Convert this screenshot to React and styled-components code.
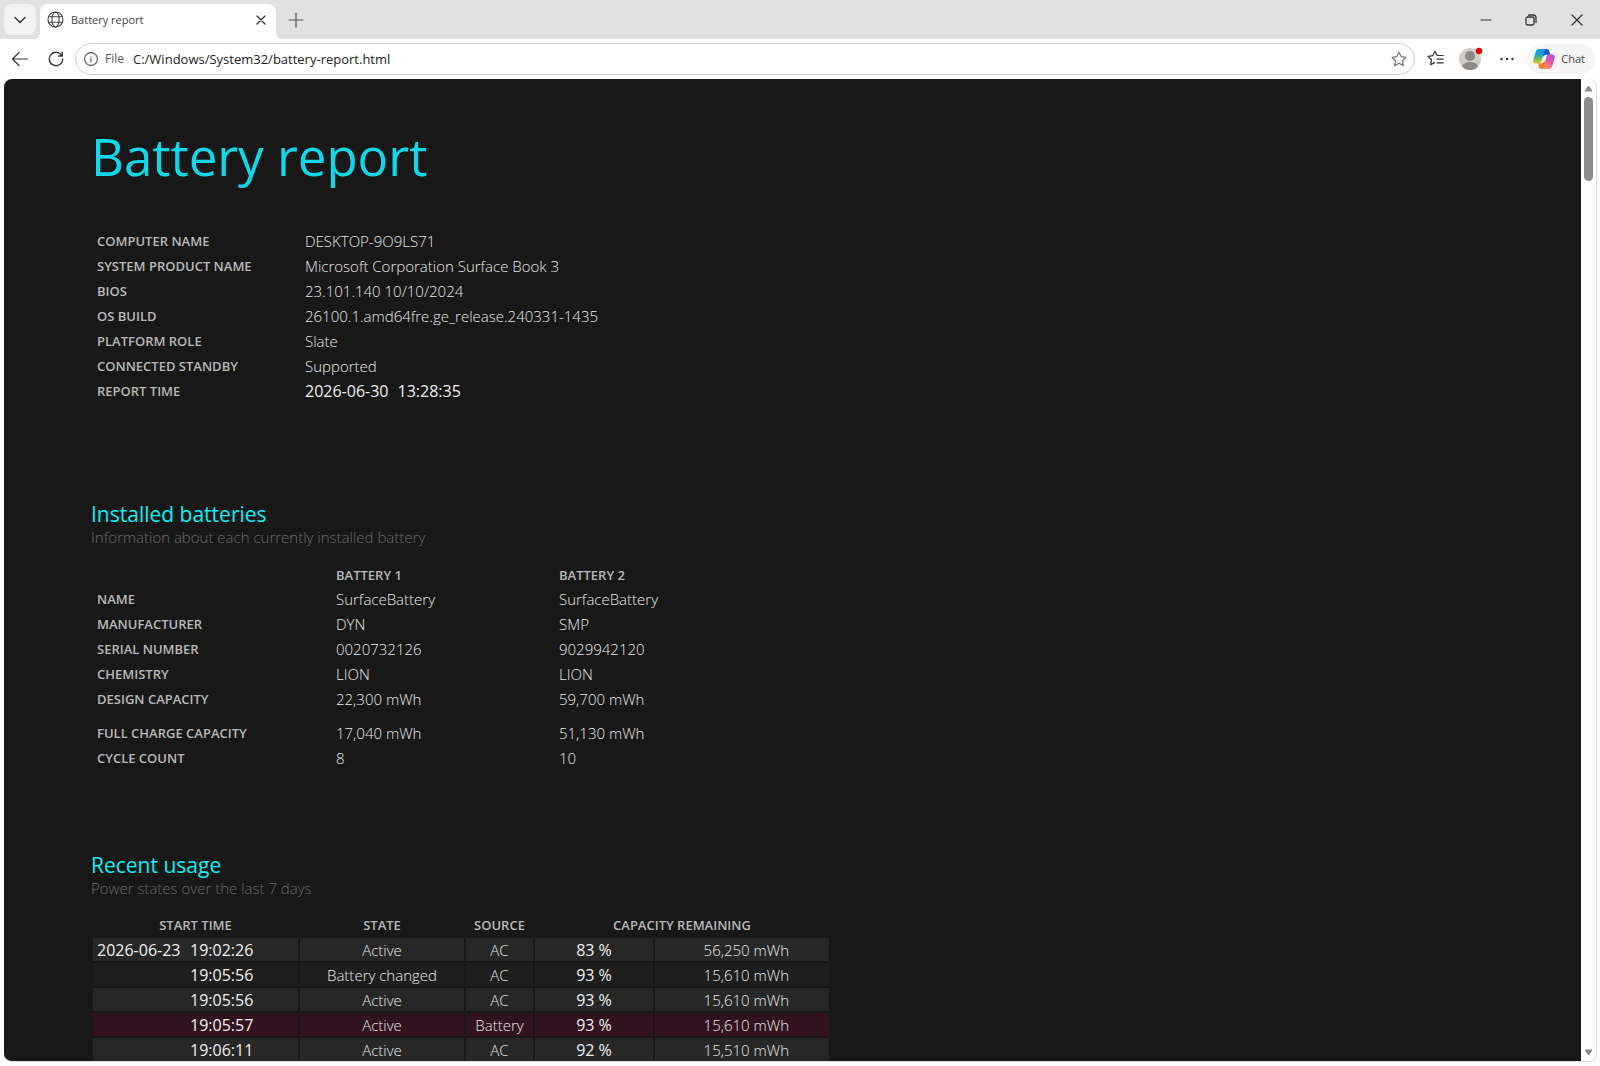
import React, { Fragment } from 'react';
import styled, { createGlobalStyle } from 'styled-components';

const GlobalStyle = createGlobalStyle`
    * {
        box-sizing: border-box;
    }

    body {
        margin: 0;
        background: #fdfdfd;
        font-family: "Open Sans", "Noto Sans", sans-serif;
    }

    button, input {
        font-family: inherit;
    }
`;

/* browser window */

const Browser = styled.div`
    display: flex;
    flex-direction: column;
    height: 100vh;
    overflow: hidden;
`;

const TabStrip = styled.header`
    display: flex;
    align-items: center;
    height: 39px;
    padding-left: 4px;
    background: #e1e1e1;
`;

const IconButton = styled.button`
    display: flex;
    align-items: center;
    justify-content: center;
    flex: none;
    width: ${props => props.$width || 36}px;
    height: 31px;
    padding: 0;
    border: 0;
    border-radius: 8px;
    background: ${props => props.$bg || 'transparent'};
    color: ${props => props.$color || '#333'};
`;

const Tab = styled.div`
    position: relative;
    display: flex;
    align-items: center;
    align-self: flex-end;
    width: 236px;
    height: 35px;
    margin-left: 4px;
    padding: 0 3px 4px 7px;
    border-radius: 8px 8px 0 0;
    background: #fff;
    color: #444;

    &::before, &::after {
        content: "";
        position: absolute;
        bottom: 0;
        width: 6px;
        height: 6px;
    }

    &::before {
        right: 100%;
        background: radial-gradient(circle at 0 0, transparent 6px, #fff 6px);
    }

    &::after {
        left: 100%;
        background: radial-gradient(circle at 100% 0, transparent 6px, #fff 6px);
    }
`;

const TabTitle = styled.span`
    flex: 1;
    margin-left: 7px;
    font-size: 11px;
`;

const WindowControls = styled.div`
    display: flex;
    margin-left: auto;
`;

const Toolbar = styled.div`
    display: flex;
    align-items: center;
    height: 40px;
    padding: 0 5px 1px 2px;
    background: #fff;
`;

const AddressBar = styled.div`
    display: flex;
    align-items: center;
    flex: 1;
    height: 32px;
    margin: 0 2px 0 1px;
    padding: 0 1px 0 8px;
    border: 1px solid #cfcfcf;
    border-radius: 16px;
    color: #555;
`;

const Scheme = styled.label`
    margin: 0 9px 0 7px;
    font-size: 12px;
`;

const UrlInput = styled.input`
    flex: 1;
    min-width: 0;
    padding: 0;
    border: 0;
    outline: 0;
    background: transparent;
    color: #222;
    font-size: 13px;
`;

const ChatButton = styled.button`
    display: flex;
    align-items: center;
    gap: 6px;
    height: 30px;
    margin-left: 2px;
    padding: 0 10px 0 6px;
    border: 0;
    border-radius: 15px;
    background: #f5f5f5;
    color: #444;
    font-size: 11px;
`;

const Frame = styled.div`
    display: flex;
    flex: 1;
    min-height: 0;
    margin: 0 3px 4px 4px;
    border: solid #dcdcdc;
    border-width: 0 1px 1px 0;
    border-radius: 8px;
    overflow: hidden;
    background: #fcfcfc;
`;

const Scrollbar = styled.div`
    display: flex;
    flex-direction: column;
    align-items: center;
    flex: none;
    width: 15px;
    padding: 6px 0 5px;
    color: #8b8b8b;
`;

const Thumb = styled.div`
    width: 9px;
    height: 84px;
    margin: 5px 0 auto;
    border-radius: 5px;
    background: #8b8b8b;
`;

/* report */

const Report = styled.main`
    flex: 1;
    padding: 41px 87px 0;
    overflow: hidden;
    background: #181818;
    color: #e8e8e8;
    font-size: 15px;
    font-weight: 300;
`;

const Title = styled.h1`
    margin: 0;
    color: #11d8e8;
    font-size: 51px;
    font-weight: 400;
    line-height: 72px;
`;

const Section = styled.section`
    margin-top: ${props => props.$gap}px;
`;

const Heading = styled.h2`
    margin: 0;
    color: #11eef4;
    font-size: 21px;
    font-weight: 400;
    line-height: 24px;
`;

const Description = styled.p`
    margin: 0 0 ${props => props.$below}px;
    color: #6a6a6a;
    line-height: 23px;
`;

const InfoTable = styled.table`
    padding-left: 6px;
    border-spacing: 0;
    line-height: 25px;

    td, th {
        padding: 0;
        text-align: left;
        white-space: nowrap;
    }

    thead {
        line-height: 24px;
    }
`;

const LabelHead = styled.th`
    color: #b8b8b8;
    font-size: 13px;
    font-weight: 600;
    text-transform: uppercase;
`;

const LabelCell = styled(LabelHead)`
    width: ${props => props.$width}px;
`;

const InfoRow = styled.tr`
    td, th {
        padding-top: ${props => (props.$spaced ? 9 : 0)}px;
    }
`;

const ValueCell = styled.td`
    width: ${props => props.$width || 'auto'};
`;

const Strong = styled.span`
    color: #f0f0f0;
    font-size: 16px;
    font-weight: 400;
`;

const Time = styled.span`
    margin-left: 9px;
`;

const UsageTable = styled.table`
    width: 740px;
    border-spacing: 2px;
    table-layout: fixed;
    line-height: 21px;

    td, th {
        height: 23px;
        padding: 2px 0 0;
        text-align: center;
        white-space: nowrap;
    }

    thead th {
        height: 22px;
        padding: 0;
        line-height: 22px;
    }
`;

const rowColors = {
    even: '#272727',
    odd: '#1e1e1e',
    battery: '#31131f',
};

const UsageRow = styled.tr`
    background: ${props => rowColors[props.$kind]};
`;

const StartTime = styled.div`
    display: grid;
    grid-template-columns: 84px auto;
    column-gap: 9px;
    padding-left: 4px;
    color: #f0f0f0;
    font-size: 16px;
    font-weight: 400;
    text-align: left;
`;

const Capacity = styled.div`
    padding-right: 40px;
    text-align: right;
`;

const system = [
    ['Computer name', 'DESKTOP-9O9LS71'],
    ['System product name', 'Microsoft Corporation Surface Book 3'],
    ['BIOS', '23.101.140 10/10/2024'],
    ['OS build', '26100.1.amd64fre.ge_release.240331-1435'],
    ['Platform role', 'Slate'],
    ['Connected standby', 'Supported'],
];

const batteries = [
    ['Name', 'SurfaceBattery', 'SurfaceBattery'],
    ['Manufacturer', 'DYN', 'SMP'],
    ['Serial number', '0020732126', '9029942120'],
    ['Chemistry', 'LION', 'LION'],
    ['Design capacity', '22,300 mWh', '59,700 mWh'],
    ['Full charge capacity', '17,040 mWh', '51,130 mWh'],
    ['Cycle count', '8', '10'],
];

const usage = [
    { date: '2026-06-23', time: '19:02:26', state: 'Active', source: 'AC', percent: '83 %', capacity: '56,250 mWh' },
    { time: '19:05:56', state: 'Battery changed', source: 'AC', percent: '93 %', capacity: '15,610 mWh' },
    { time: '19:05:56', state: 'Active', source: 'AC', percent: '93 %', capacity: '15,610 mWh' },
    { time: '19:05:57', state: 'Active', source: 'Battery', percent: '93 %', capacity: '15,610 mWh' },
    { time: '19:06:11', state: 'Active', source: 'AC', percent: '92 %', capacity: '15,510 mWh' },
];

const rowKind = (row, i) => {
    if (row.source === 'Battery') return 'battery';
    return i % 2 ? 'odd' : 'even';
};

/* icons */

const Icon = ({ size = 16, stroke = 1.2, children }) => (
    <svg width={size} height={size} viewBox={`0 0 ${size} ${size}`} fill="none" stroke="currentColor"
        strokeWidth={stroke} strokeLinecap="round" strokeLinejoin="round" aria-hidden="true">
        {children}
    </svg>
);

const GlobeIcon = () => (
    <Icon size={17} stroke={1.1}>
        <circle cx="8.5" cy="8.5" r="7.5" />
        <ellipse cx="8.5" cy="8.5" rx="3.6" ry="7.5" />
        <path d="M1.8 5.8h13.4M1.8 11.2h13.4" />
    </Icon>
);

const CopilotIcon = () => (
    <svg width="22" height="20" viewBox="0 0 22 20" aria-hidden="true">
        <defs>
            <linearGradient id="cpLeft" x1="0" y1="0" x2="0" y2="1">
                <stop offset="0" stopColor="#1a8df0" />
                <stop offset="0.4" stopColor="#22a6cc" />
                <stop offset="0.7" stopColor="#6fbf4c" />
                <stop offset="1" stopColor="#f4c81c" />
            </linearGradient>
            <linearGradient id="cpTop" x1="0" y1="0" x2="1" y2="0.4">
                <stop offset="0" stopColor="#1c7de8" />
                <stop offset="1" stopColor="#1746c8" />
            </linearGradient>
            <linearGradient id="cpRight" x1="0.8" y1="0" x2="0.3" y2="1">
                <stop offset="0" stopColor="#a558e8" />
                <stop offset="0.5" stopColor="#ec5a9c" />
                <stop offset="1" stopColor="#ff9a5c" />
            </linearGradient>
            <linearGradient id="cpBottom" x1="0" y1="0" x2="1" y2="0">
                <stop offset="0" stopColor="#f6a21c" />
                <stop offset="1" stopColor="#f0503c" />
            </linearGradient>
        </defs>
        <path d="M10.5 0h3.2c1.600 0 2.200 1 2.600 2.300l1 3.400h-3.800c-1.600 0-2.500.9-2.900 2.300L8.500 3z" fill="url(#cpTop)" />
        <path d="M11.500 20H8.300c-1.600 0-2.200-1-2.600-2.300l-1-3.400h3.800c1.600 0 2.500-.9 2.900-2.300l2.100 5z" fill="url(#cpBottom)" />
        <path d="M6.200 0h7.500c-1.500.1-2.100 1.100-2.500 2.400L8.600 12c-.5 1.700-1.400 2.500-3.100 2.500H2.600C.6 14.500-.2 13 .3 11L2.700 3C3.300 1 4.400 0 6.200 0z" fill="url(#cpLeft)" />
        <path d="M15.800 20H8.300c1.500-.1 2.100-1.100 2.500-2.400L13.400 8c.5-1.700 1.400-2.500 3.100-2.500h2.900c2 0 2.800 1.500 2.300 3.500L19.300 17c-.6 2-1.700 3-3.500 3z" fill="url(#cpRight)" />
    </svg>
);

const AvatarIcon = () => (
    <svg width="26" height="24" viewBox="0 0 26 24" aria-hidden="true">
        <defs>
            <clipPath id="avatarClip"><circle cx="12" cy="12" r="11" /></clipPath>
        </defs>
        <circle cx="12" cy="12" r="11" fill="#cfcdca" />
        <g clipPath="url(#avatarClip)" fill="#8d8987">
            <circle cx="12" cy="9" r="5" />
            <ellipse cx="12" cy="20" rx="8" ry="5" />
        </g>
        <circle cx="21" cy="4" r="3.2" fill="#e8000d" />
    </svg>
);

const starPath = 'M8 1.2l2.1 4.4 4.9.7-3.5 3.4.8 4.9L8 12.3l-4.3 2.300.8-4.900L1 6.300l4.900-.7z';

function App() {
    return (
        <Fragment>
            <GlobalStyle />
            <Browser>
                <TabStrip>
                    <IconButton $width={32} $bg="#f3f3f3" aria-label="Tab actions">
                        <Icon stroke={1.4}><path d="M3 5.5l5 5 5-5" /></Icon>
                    </IconButton>
                    <Tab>
                        <GlobeIcon />
                        <TabTitle>Battery report</TabTitle>
                        <IconButton $width={24} aria-label="Close tab">
                            <Icon size={10} stroke={1.4}><path d="M1 1l8 8M9 1l-8 8" /></Icon>
                        </IconButton>
                    </Tab>
                    <IconButton $width={40} $color="#555" aria-label="New tab">
                        <Icon size={16}><path d="M8 1v14M1 8h14" /></Icon>
                    </IconButton>
                    <WindowControls>
                        <IconButton $width={45} aria-label="Minimize">
                            <Icon size={12}><path d="M1 6h10" /></Icon>
                        </IconButton>
                        <IconButton $width={46} aria-label="Restore">
                            <Icon size={12} stroke={1.3}>
                                <rect x="1" y="3" width="8" height="8" rx="1.5" />
                                <path d="M3.5 1h5A2.5 2.5 0 0 1 11 3.5v5" />
                            </Icon>
                        </IconButton>
                        <IconButton $width={46} aria-label="Close">
                            <Icon size={12} stroke={1.3}><path d="M1 1l10 10M11 1L1 11" /></Icon>
                        </IconButton>
                    </WindowControls>
                </TabStrip>
                <Toolbar>
                    <IconButton aria-label="Back">
                        <Icon size={18}><path d="M16.5 9H1.5M8 2.5L1.5 9 8 15.5" /></Icon>
                    </IconButton>
                    <IconButton aria-label="Refresh">
                        <Icon size={16} stroke={1.3}>
                            <path d="M14 5A6.7 6.7 0 1 0 14.7 8M14.3 1.2V5h-3.8" />
                        </Icon>
                    </IconButton>
                    <AddressBar>
                        <Icon size={14} stroke={1.1}>
                            <circle cx="7" cy="7" r="6.4" />
                            <path d="M7 6.4v3.6M7 4.2v.1" />
                        </Icon>
                        <Scheme htmlFor="url">File</Scheme>
                        <UrlInput id="url" type="text" defaultValue="C:/Windows/System32/battery-report.html" />
                        <IconButton $width={28} $color="#777" aria-label="Add to favorites">
                            <Icon><path d={starPath} /></Icon>
                        </IconButton>
                    </AddressBar>
                    <IconButton aria-label="Favorites">
                        <Icon size={17}>
                            <path d="M10 5.5L8 1.2 5.9 5.6 1 6.3l3.5 3.4-.8 4.9L7.5 12.6M10 5.5h6.2M10 9.2h6.2M10 12.9h6.2" />
                        </Icon>
                    </IconButton>
                    <IconButton aria-label="Profile"><AvatarIcon /></IconButton>
                    <IconButton aria-label="Settings and more">
                        <Icon size={14} stroke={2.4}><path d="M1.5 7v0M7 7v0M12.5 7v0" /></Icon>
                    </IconButton>
                    <ChatButton>
                        <CopilotIcon />
                        Chat
                    </ChatButton>
                </Toolbar>
                <Frame>
                    <Report>
                        <Title>Battery report</Title>
                        <Section $gap={37}>
                            <InfoTable>
                                <tbody>
                                    {system.map(([label, value]) => (
                                        <tr key={label}>
                                            <LabelCell scope="row" $width={208}>{label}</LabelCell>
                                            <ValueCell>{value}</ValueCell>
                                        </tr>
                                    ))}
                                    <tr>
                                        <LabelCell scope="row" $width={208}>Report time</LabelCell>
                                        <ValueCell>
                                            <Strong>2026-06-30<Time>13:28:35</Time></Strong>
                                        </ValueCell>
                                    </tr>
                                </tbody>
                            </InfoTable>
                        </Section>
                        <Section $gap={98}>
                            <Heading>Installed batteries</Heading>
                            <Description $below={14}>Information about each currently installed battery</Description>
                            <InfoTable>
                                <thead>
                                    <tr>
                                        <td />
                                        <LabelHead scope="col">Battery 1</LabelHead>
                                        <LabelHead scope="col">Battery 2</LabelHead>
                                    </tr>
                                </thead>
                                <tbody>
                                    {batteries.map(([label, first, second]) => (
                                        <InfoRow key={label} $spaced={label === 'Full charge capacity'}>
                                            <LabelCell scope="row" $width={239}>{label}</LabelCell>
                                            <ValueCell $width="223px">{first}</ValueCell>
                                            <ValueCell>{second}</ValueCell>
                                        </InfoRow>
                                    ))}
                                </tbody>
                            </InfoTable>
                        </Section>
                        <Section $gap={82}>
                            <Heading>Recent usage</Heading>
                            <Description $below={12}>Power states over the last 7 days</Description>
                            <UsageTable>
                                <colgroup>
                                    <col width="205" />
                                    <col width="164" />
                                    <col width="67" />
                                    <col width="118" />
                                    <col width="174" />
                                </colgroup>
                                <thead>
                                    <tr>
                                        <LabelHead scope="col">Start time</LabelHead>
                                        <LabelHead scope="col">State</LabelHead>
                                        <LabelHead scope="col">Source</LabelHead>
                                        <LabelHead scope="col" colSpan="2">Capacity remaining</LabelHead>
                                    </tr>
                                </thead>
                                <tbody>
                                    {usage.map((row, i) => (
                                        <UsageRow key={i} $kind={rowKind(row, i)}>
                                            <td>
                                                <StartTime>
                                                    <span>{row.date}</span>
                                                    <span>{row.time}</span>
                                                </StartTime>
                                            </td>
                                            <td>{row.state}</td>
                                            <td>{row.source}</td>
                                            <td><Strong>{row.percent}</Strong></td>
                                            <td><Capacity>{row.capacity}</Capacity></td>
                                        </UsageRow>
                                    ))}
                                </tbody>
                            </UsageTable>
                        </Section>
                    </Report>
                    <Scrollbar>
                        <svg width="9" height="7" viewBox="0 0 9 7" aria-hidden="true">
                            <path d="M4.5 1L8 6H1z" fill="currentColor" stroke="currentColor" strokeLinejoin="round" />
                        </svg>
                        <Thumb />
                        <svg width="9" height="7" viewBox="0 0 9 7" aria-hidden="true">
                            <path d="M4.5 6L8 1H1z" fill="currentColor" stroke="currentColor" strokeLinejoin="round" />
                        </svg>
                    </Scrollbar>
                </Frame>
            </Browser>
        </Fragment>
    );
}

export default App;
